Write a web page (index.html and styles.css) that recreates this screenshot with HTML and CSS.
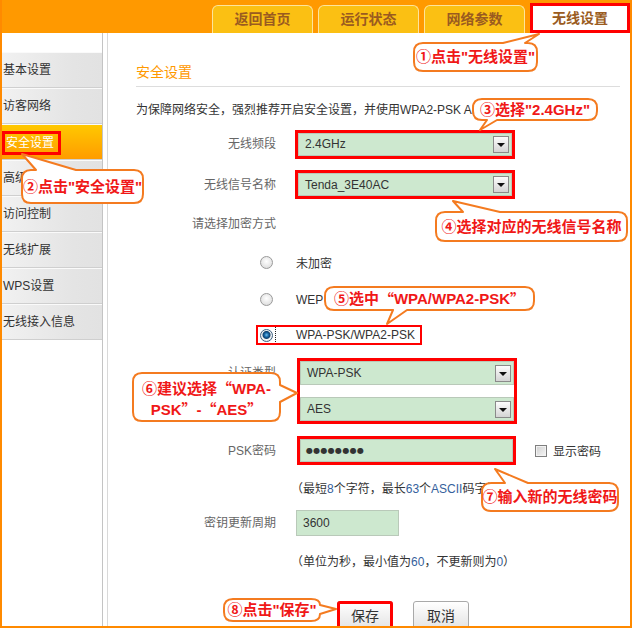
FILE: index.html
```html
<!DOCTYPE html>
<html lang="zh-CN">
<head>
  <meta charset="UTF-8">
  <title>无线设置 - 安全设置</title>
  <link rel="stylesheet" href="styles.css">
</head>
<body>
<div class="page">
  <div class="frame">
    <div class="topbar">
      <a class="tab">返回首页</a>
      <a class="tab">运行状态</a>
      <a class="tab">网络参数</a>
      <a class="tab tab-active">无线设置</a>
    </div>

    <div class="main">
      <div class="side">
        <ul class="menu">
          <li>基本设置</li>
          <li>访客网络</li>
          <li class="active"><span class="mark-box">安全设置</span></li>
          <li>高级设置</li>
          <li>访问控制</li>
          <li>无线扩展</li>
          <li>WPS设置</li>
          <li>无线接入信息</li>
        </ul>
      </div>

      <div class="content">
        <h2 class="title">安全设置</h2>
        <p class="intro">为保障网络安全，强烈推荐开启安全设置，并使用WPA2-PSK AES加密方法。</p>

        <div class="form">
          <label class="lbl">无线频段</label>
          <div class="select mark"><span>2.4GHz</span><i class="arrow"></i></div>

          <label class="lbl">无线信号名称</label>
          <div class="select mark"><span>Tenda_3E40AC</span><i class="arrow"></i></div>

          <label class="lbl">请选择加密方式</label>
          <div></div>

          <div class="radio-row">
            <i class="radio"></i><span class="radio-text">未加密</span>
          </div>
          <div class="radio-row">
            <i class="radio"></i><span class="radio-text">WEP</span>
          </div>
          <div class="radio-row radio-row-marked">
            <span class="radio-mark">
              <span class="focus"><i class="radio radio-on"></i></span>
              <span class="radio-text">WPA-PSK/WPA2-PSK</span>
            </span>
          </div>

          <label class="lbl lbl-top">认证类型</label>
          <div class="select-group mark">
            <div class="select"><span>WPA-PSK</span><i class="arrow"></i></div>
            <div class="select"><span>AES</span><i class="arrow"></i></div>
          </div>

          <label class="lbl">PSK密码</label>
          <div class="pwd-line">
            <div class="input input-pwd mark"><span class="dots">●●●●●●●●</span></div>
            <i class="checkbox"></i>
            <span class="check-text">显示密码</span>
          </div>

          <div class="hint">（最短<span class="num">8</span>个字符，最长<span class="num">63</span>个<span class="num">ASCII</span>码字符或<span class="num">64</span>个十六进制字符）</div>

          <label class="lbl">密钥更新周期</label>
          <div class="input input-short">3600</div>

          <div class="hint">（单位为秒，最小值为<span class="num">60</span>，不更新则为<span class="num">0</span>）</div>
        </div>

        <div class="actions">
          <button class="btn btn-marked">保存</button>
          <button class="btn">取消</button>
        </div>
      </div>
    </div>
  </div>

  <!-- annotation bubbles drawn over the screenshot -->
  <div class="notes">
    <svg class="bubbles" width="632" height="628" viewBox="0 0 632 628">
      <path d="M423 43 L503 43 L539 34 L525 43 L528 43 Q537 43 537 52 L537 62 Q537 71 528 71 L423 71 Q414 71 414 62 L414 52 Q414 43 423 43 Z"/>
      <path d="M31 170 L36 170 L22 154 L76 170 L134 170 Q143 170 143 179 L143 194 Q143 203 134 203 L31 203 Q22 203 22 194 L22 179 Q22 170 31 170 Z"/>
      <path d="M482 99 L588 99 Q597 99 597 108 L597 111 Q597 120 588 120 L497 120 L480 130 L487 120 L482 120 Q473 120 473 111 L473 108 Q473 99 482 99 Z"/>
      <path d="M445 212 L463 212 L453 201 L500 212 L618 212 Q627 212 627 221 L627 232 Q627 241 618 241 L445 241 Q436 241 436 232 L436 221 Q436 212 445 212 Z"/>
      <path d="M334 287 L525 287 Q534 287 534 296 L534 301 Q534 310 525 310 L407 310 L387 324 L393 310 L334 310 Q325 310 325 301 L325 296 Q325 287 334 287 Z"/>
      <path d="M142 373 L271 373 Q280 373 280 382 L280 385 L297 393 L280 402 L280 412 Q280 421 271 421 L142 421 Q133 421 133 412 L133 382 Q133 373 142 373 Z"/>
      <path d="M491 483 L505 483 L495 469 L528 483 L609 483 Q618 483 618 492 L618 502 Q618 511 609 511 L491 511 Q482 511 482 502 L482 492 Q482 483 491 483 Z"/>
      <path d="M233 599 L311 599 Q320 599 320 605 L336 609 L320 614 Q320 621 311 621 L233 621 Q224 621 224 612 L224 608 Q224 599 233 599 Z"/>
    </svg>
    <div class="note n1">①点击"无线设置"</div>
    <div class="note n2">②点击"安全设置"</div>
    <div class="note n3">③选择"2.4GHz"</div>
    <div class="note n4">④选择对应的无线信号名称</div>
    <div class="note n5">⑤选中<span class="q">“</span>WPA/WPA2-PSK<span class="q">”</span></div>
    <div class="note n6">⑥建议选择<span class="q">“</span>WPA-<br>PSK<span class="q">”</span>-<span class="q">“</span>AES<span class="q">”</span></div>
    <div class="note n7">⑦输入新的无线密码</div>
    <div class="note n8">⑧点击"保存"</div>
  </div>
</div>
</body>
</html>
```

FILE: styles.css
```css
:root {
  --orange: #ff9900;
  --frame: #ff8a00;
  --field: #cde8cf;
  --mark: #ff0000;
  --note-line: #f47b20;
}

* {
  box-sizing: border-box;
  margin: 0;
  padding: 0;
}

body {
  font-family: "Liberation Sans", "Noto Sans CJK SC", sans-serif;
  font-size: 12px;
  color: #333;
  background: #fff;
}

.page {
  position: relative;
  width: 632px;
  height: 628px;
}

.frame {
  width: 632px;
  height: 628px;
  overflow: hidden;
  border: 2px solid var(--frame);
  border-top: none;
  display: flex;
  flex-direction: column;
}

/* top navigation */
.topbar {
  height: 33px;
  flex-shrink: 0;
  background: var(--orange);
  display: flex;
  justify-content: flex-end;
  align-items: flex-end;
  gap: 5px;
}

.tab {
  width: 101px;
  height: 28px;
  line-height: 27px;
  text-align: center;
  background: #fbc013;
  border: 1px solid #fde49b;
  border-bottom: none;
  border-radius: 6px 6px 0 0;
  color: #9a5b20;
  font-size: 14px;
  font-weight: bold;
}

.tab-active {
  width: 100px;
  height: 30px;
  line-height: 24px;
  background: #fff;
  border: 3px solid var(--mark);
  border-radius: 0;
}

.main {
  flex: 1;
  display: flex;
}

/* left menu */
.side {
  width: 101px;
  flex-shrink: 0;
  border-right: 1px solid #c4c4c4;
  padding-top: 19px;
}

.menu {
  list-style: none;
}

.menu li {
  height: 36px;
  line-height: 34px;
  padding-left: 1px;
  background: linear-gradient(to right, #f1f1f1, #e4e4e4 72%, #e2e2e2);
  border-top: 1px solid #fafafa;
  border-bottom: 1px solid #cfcfcf;
  white-space: nowrap;
}

.menu li.active {
  background: linear-gradient(#ffc800, #ff9c00);
  color: #fff;
  padding-left: 0;
}

.mark-box {
  display: inline-block;
  height: 24px;
  line-height: 18px;
  padding: 0 4px 0 1px;
  border: 3px solid var(--mark);
  vertical-align: middle;
}

/* main panel */
.content {
  flex: 1;
  margin-left: 4px;
  border-left: 1px solid #d9d9d9;
  padding: 29px 18px 0 28px;
}

.title {
  font-size: 14px;
  font-weight: normal;
  color: var(--orange);
  line-height: 20px;
  padding-bottom: 4px;
  border-bottom: 1px solid #dddddd;
}

.intro {
  margin-top: 13px;
  line-height: 20px;
  white-space: nowrap;
}

.form {
  margin-top: 4px;
  display: grid;
  grid-template-columns: 140px 1fr;
  grid-template-rows: 40px 41px 38px 39px 35px 36px 76px 43px 31px 39px 36px;
  column-gap: 22px;
  align-items: center;
}

.lbl {
  text-align: right;
  color: #666;
  line-height: 20px;
  white-space: nowrap;
}

.lbl-top {
  align-self: start;
  margin-top: 10px;
}

.select {
  width: 214px;
  height: 23px;
  background: var(--field);
  border: 1px solid #b9c9b9;
  display: flex;
  align-items: center;
  justify-content: space-between;
  padding-left: 6px;
  padding-right: 2px;
}

.mark {
  outline: 3px solid var(--mark);
}

.arrow {
  width: 16px;
  height: 17px;
  border: 1px solid #8a8a8a;
  background: linear-gradient(#fdfdfd, #d4d4d4);
  position: relative;
}

.arrow::after {
  content: "";
  position: absolute;
  left: 3px;
  top: 6px;
  border-left: 4px solid transparent;
  border-right: 4px solid transparent;
  border-top: 4px solid #111;
}

.radio-row {
  grid-column: 1 / -1;
  padding-left: 124px;
  display: flex;
  align-items: center;
}

.radio-row-marked {
  padding-left: 121px;
}

.radio {
  width: 13px;
  height: 13px;
  border-radius: 50%;
  border: 1px solid #9a9a9a;
  background: radial-gradient(circle at 50% 40%, #ffffff, #e2e2e2 70%, #cfcfcf);
}

.radio-on {
  border-color: #3c5f80;
  background: radial-gradient(circle at 50% 45%, #6fc0f0 0, #1a6aa8 2px, #0d3f6e 3.5px, #f4f4f4 4.5px, #dcdcdc);
}

.radio-text {
  margin-left: 23px;
  color: #333;
}

.radio-mark {
  display: flex;
  align-items: center;
  height: 18px;
  padding-right: 6px;
  outline: 2px solid var(--mark);
  outline-offset: -1px;
}

.radio-mark .radio-text {
  margin-left: 20px;
}

.focus {
  width: 19px;
  height: 18px;
  border: 1px dotted #222;
  display: flex;
  align-items: center;
  justify-content: center;
}

.select-group {
  align-self: start;
  margin-top: 8px;
  margin-left: 2px;
  width: 214px;
  display: flex;
  flex-direction: column;
  gap: 12px;
}

.select-group .select {
  height: 24px;
}

.pwd-line {
  display: flex;
  align-items: center;
}

.input {
  height: 23px;
  background: var(--field);
  border: 1px solid #b9c9b9;
  display: flex;
  align-items: center;
  padding-left: 5px;
}

.input-pwd {
  width: 213px;
  margin-left: 2px;
}

.dots {
  font-family: "DejaVu Sans", sans-serif;
  font-size: 8px;
  letter-spacing: 0.3px;
  color: #333;
}

.input-short {
  width: 103px;
  height: 26px;
  margin-left: -2px;
  padding-left: 6px;
}

.checkbox {
  width: 12px;
  height: 12px;
  margin-left: 22px;
  border: 1px solid #7f7f7f;
  background: linear-gradient(135deg, #cfcfcf, #f6f6f6);
  box-shadow: inset 0 0 0 1px #f2f2f2;
}

.check-text {
  margin-left: 6px;
}

.hint {
  grid-column: 2;
  margin-left: -7px;
  white-space: nowrap;
}

.num {
  color: #35619c;
}

.actions {
  margin-top: 23px;
  padding-left: 201px;
  display: flex;
  gap: 20px;
}

.btn {
  width: 56px;
  height: 28px;
  font-family: "Liberation Sans", "Noto Sans CJK SC", sans-serif;
  font-size: 14px;
  color: #333;
  background: linear-gradient(#ffffff, #e4e4e4);
  border: 1px solid #a9a9a9;
  border-radius: 3px;
}

.btn-marked {
  outline: 3px solid var(--mark);
  outline-offset: -3px;
}

/* annotation bubbles */
.notes {
  position: absolute;
  inset: 0;
  pointer-events: none;
}

.bubbles {
  position: absolute;
  left: 0;
  top: 0;
}

.bubbles path {
  fill: #fff;
  stroke: var(--note-line);
  stroke-width: 2;
  stroke-linejoin: round;
}

.note {
  position: absolute;
  display: flex;
  flex-wrap: wrap;
  align-items: center;
  align-content: center;
  justify-content: center;
  text-align: center;
  color: #f01818;
  font-size: 15px;
  font-weight: bold;
  line-height: 20px;
  white-space: nowrap;
}

.note .q {
  font-family: "Noto Sans CJK SC", sans-serif;
}

.n6 {
  display: block;
  padding-top: 4px;
}

.n1 { left: 414px; top: 43px; width: 123px; height: 28px; }
.n2 { left: 22px; top: 170px; width: 121px; height: 33px; }
.n3 { left: 473px; top: 99px; width: 124px; height: 21px; }
.n4 { left: 436px; top: 212px; width: 191px; height: 29px; }
.n5 { left: 325px; top: 287px; width: 209px; height: 23px; }
.n6 { left: 133px; top: 373px; width: 147px; height: 48px; }
.n7 { left: 482px; top: 483px; width: 136px; height: 28px; }
.n8 { left: 224px; top: 599px; width: 96px; height: 22px; }
```
